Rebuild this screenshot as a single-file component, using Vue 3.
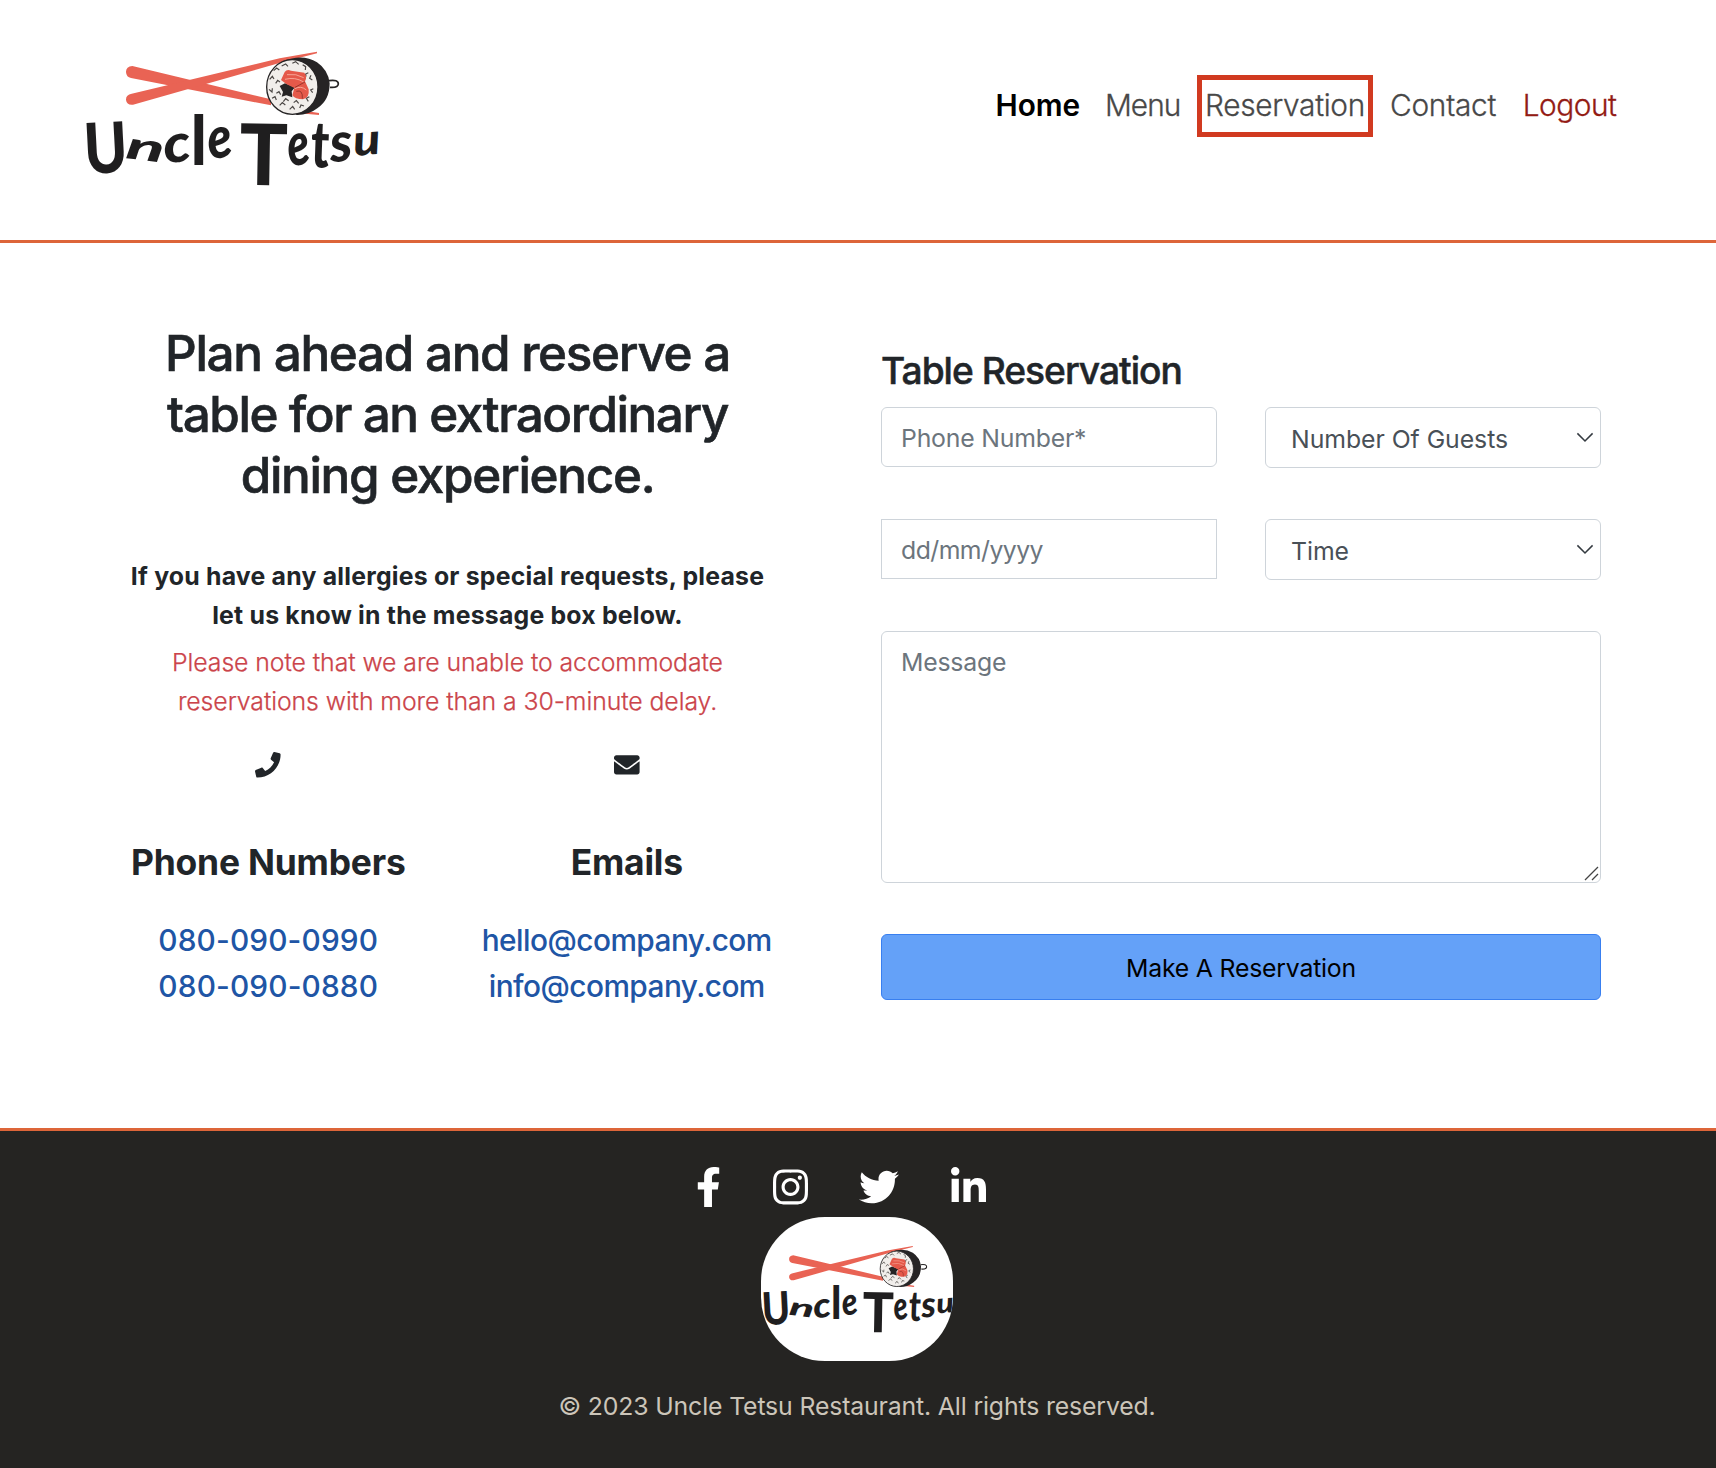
<script setup>
import { h } from 'vue'

// Brush-style wordmark: every letter has its own position, tilt and stretch.
const letters = [
  { c: 'U', x: 47, y: 432, r: -3, sx: 1.75, sy: 2.1, st: 'normal' },
  { c: 'n', x: 166, y: 384, r: 7, sx: 2.1, sy: 1.15, st: 'italic' },
  { c: 'c', x: 286, y: 400, r: -6, sx: 1.8, sy: 1.6, st: 'italic' },
  { c: 'l', x: 363, y: 404, r: 0, sx: 1.9, sy: 2.08, st: 'normal' },
  { c: 'e', x: 420, y: 388, r: -8, sx: 1.5, sy: 1.75, st: 'italic' },
  { c: 'T', x: 508, y: 464, r: 1, sx: 2.4, sy: 2.55, st: 'normal' },
  { c: 'e', x: 660, y: 409, r: -8, sx: 1.35, sy: 1.8, st: 'italic' },
  { c: 't', x: 722, y: 411, r: 2, sx: 1.45, sy: 1.95, st: 'normal' },
  { c: 's', x: 784, y: 396, r: -4, sx: 1.65, sy: 1.65, st: 'italic' },
  { c: 'u', x: 854, y: 378, r: -5, sx: 1.5, sy: 1.3, st: 'italic' },
]

const p = (d, a) => h('path', { d, ...a })
const dark = '#262425'
const Logo = () =>
  h('svg', { viewBox: '40 -69 887 667', role: 'img' }, [
    h('g', { fill: '#e96354' }, [
      p('M188 108 Q168 110 169 127 Q170 142 184 144 L604 226 L604 208 Z'),
      p('M690 240 L748 249 L748 255 L690 250 Z'),
      p('M186 191 Q168 194 169 210 Q171 226 190 224 L640 96 L742 70 L742 65 L630 85 Z'),
    ]),
    p('M640 93 Q700 70 742 97 Q776 120 780 160 Q780 210 744 234 Q716 256 680 255 Z', { fill: dark }),
    p('M778 152 Q806 148 806 162 Q805 174 781 172', { fill: 'none', stroke: dark, 'stroke-width': 5 }),
    h('ellipse', { cx: 668, cy: 171, rx: 77, ry: 82, fill: '#f1eeeb', stroke: dark, 'stroke-width': 4 }),
    p('M612 122l9-8 8 6M636 108l12-6 7 7M668 100l10-5 9 8M699 104l9 6-1 10M600 148l8-9 5 8M598 178l9 8 1-11M607 205l9-5 4 10M630 226l8-8 9 7M660 238l9-9 6 9M690 234l4-9 9 3M716 214l-6-9 9-5M729 188l-6-8 8-4M728 150l-8-5 4-9M641 215l7-9 9 6M672 218l8-6 7 8M620 190l8-5 5 9M618 160l6-9 7 5M716 128l-8 4 1 8', {
      fill: 'none', stroke: '#4a4644', 'stroke-width': 3.5,
    }),
    p('M630 168 L646 160 L676 172 L666 184 L668 202 L650 196 L636 200 L640 186 Z', { fill: dark }),
    p('M645 126 Q652 116 664 122 L704 128 Q714 142 706 154 L717 178 Q720 204 700 208 Q676 208 668 196 L674 174 L650 162 L634 150 Z', { fill: '#e5594a' }),
    p('M646 148 Q676 140 702 156M652 134 Q680 130 702 143M676 176 Q694 166 710 180', {
      fill: 'none', stroke: '#f6a596', 'stroke-width': 3,
    }),
    p('M676 172 L706 156M680 184 Q700 178 698 206', { fill: 'none', stroke: '#8c2f28', 'stroke-width': 2.5 }),
    h('g', letters.map((l) =>
      h('text', {
        fill: '#1f1e1f',
        'font-family': 'Lato, sans-serif',
        'font-weight': 900,
        'font-style': l.st,
        'font-size': 100,
        transform: `translate(${l.x} ${l.y}) rotate(${l.r}) scale(${l.sx} ${l.sy})`,
      }, l.c))),
  ])

const socials = [
  { name: 'Facebook', w: 320, d: 'M279.14 288l14.22-92.66h-88.91v-60.13c0-25.35 12.42-50.06 52.24-50.06h40.42V6.26S260.43 0 225.36 0c-73.22 0-121.08 44.38-121.08 124.72v70.62H22.89V288h81.39v224h100.17V288z' },
  { name: 'Instagram', w: 448, d: 'M224.1 141c-63.6 0-114.9 51.3-114.9 114.9s51.3 114.9 114.9 114.9S339 319.5 339 255.9 287.7 141 224.1 141zm0 189.6c-41.1 0-74.7-33.5-74.7-74.7s33.5-74.7 74.7-74.7 74.7 33.5 74.7 74.7-33.6 74.7-74.7 74.7zm146.4-194.3c0 14.9-12 26.8-26.8 26.8-14.9 0-26.8-12-26.8-26.8s12-26.8 26.8-26.8 26.8 12 26.8 26.8zm76.1 27.2c-1.7-35.9-9.9-67.7-36.2-93.9-26.2-26.2-58-34.4-93.9-36.2-37-2.1-147.9-2.1-184.9 0-35.8 1.7-67.6 9.9-93.9 36.1s-34.4 58-36.2 93.9c-2.1 37-2.1 147.9 0 184.9 1.7 35.9 9.9 67.7 36.2 93.9s58 34.4 93.9 36.2c37 2.1 147.9 2.1 184.9 0 35.9-1.7 67.7-9.9 93.9-36.2 26.2-26.2 34.4-58 36.2-93.9 2.1-37 2.1-147.8 0-184.8zM398.8 388c-7.8 19.6-22.9 34.7-42.6 42.6-29.5 11.7-99.5 9-132.1 9s-102.7 2.6-132.1-9c-19.6-7.8-34.7-22.9-42.6-42.6-11.7-29.5-9-99.5-9-132.1s-2.6-102.7 9-132.1c7.8-19.6 22.9-34.7 42.6-42.6 29.5-11.7 99.5-9 132.1-9s102.7-2.6 132.1 9c19.6 7.8 34.7 22.9 42.6 42.6 11.7 29.5 9 99.5 9 132.1s2.7 102.7-9 132.1z' },
  { name: 'Twitter', w: 512, d: 'M459.37 151.716c.325 4.548.325 9.097.325 13.645 0 138.72-105.583 298.558-298.558 298.558-59.452 0-114.68-17.219-161.137-47.106 8.447.974 16.568 1.299 25.34 1.299 49.055 0 94.213-16.568 130.274-44.832-46.132-.975-84.792-31.188-98.112-72.772 6.498.974 12.995 1.624 19.818 1.624 9.421 0 18.843-1.3 27.614-3.573-48.081-9.747-84.143-51.98-84.143-102.985v-1.299c13.969 7.797 30.214 12.67 47.431 13.319-28.264-18.843-46.781-51.005-46.781-87.391 0-19.492 5.197-37.36 14.294-52.954 51.655 63.675 129.3 105.258 216.365 109.807-1.624-7.797-2.599-15.918-2.599-24.04 0-57.828 46.782-104.934 104.934-104.934 30.213 0 57.502 12.67 76.67 33.137 23.715-4.548 46.456-13.32 66.599-25.34-7.798 24.366-24.366 44.833-46.132 57.827 21.117-2.273 41.584-8.122 60.426-16.243-14.292 20.791-32.161 39.308-52.628 54.253z' },
  { name: 'LinkedIn', w: 448, d: 'M100.28 448H7.4V148.9h92.88zM53.79 108.1C24.09 108.1 0 83.5 0 53.8a53.79 53.79 0 0 1 107.58 0c0 29.7-24.1 54.3-53.79 54.3zM447.9 448h-92.68V302.4c0-34.7-.7-79.2-48.29-79.2-48.29 0-55.69 37.7-55.69 76.7V448h-92.78V148.9h89.08v40.8h1.3c12.4-23.5 42.69-48.3 87.88-48.3 94 0 111.28 61.9 111.28 142.3V448z' },
]
</script>

<template>
  <div class="page">
    <header class="header">
      <Logo class="logo" />
      <nav class="nav">
        <a class="home">Home</a>
        <a class="menu">Menu</a>
        <a class="current">Reservation</a>
        <a class="contact">Contact</a>
        <a class="logout">Logout</a>
      </nav>
    </header>

    <main class="main">
      <section class="info">
        <h1>
          <span class="h-a">Plan ahead and reserve a</span>
          <span class="h-b">table for an extraordinary</span>
          <span class="h-c">dining experience.</span>
        </h1>
        <p class="lead">If you have any allergies or special requests, please<br />let us know in the message box below.</p>
        <p class="note">Please note that we are unable to accommodate<br />reservations with more than a 30-minute delay.</p>
        <div class="contacts">
          <div class="channel">
            <svg class="glyph" viewBox="0 0 512 512"><path d="M493.4 24.6l-104-24c-11.3-2.6-22.9 3.3-27.5 13.9l-48 112c-4.2 9.8-1.4 21.3 6.9 28l60.6 49.6c-36 76.7-98.9 140.5-177.2 177.2l-49.6-60.6c-6.8-8.3-18.2-11.1-28-6.9l-112 48C3.9 366.5-2 378.1.6 389.4l24 104C27.1 504.2 36.7 512 48 512c256.1 0 464-207.5 464-464 0-11.2-7.7-20.9-18.6-23.4z" /></svg>
            <h2>Phone Numbers</h2>
            <a class="tel">080-090-0990</a>
            <a class="tel">080-090-0880</a>
          </div>
          <div class="channel">
            <svg class="glyph" viewBox="0 0 512 512"><path d="M502.3 190.8c3.9-3.1 9.7-.2 9.7 4.7V400c0 26.5-21.5 48-48 48H48c-26.5 0-48-21.5-48-48V195.6c0-5 5.7-7.8 9.7-4.7 22.4 17.4 52.1 39.5 154.1 113.6 21.1 15.4 56.7 47.8 92.2 47.6 35.7.3 72-32.8 92.3-47.6 102-74.1 131.6-96.3 154-113.7zM256 320c23.2.4 56.6-29.2 73.4-41.4 132.7-96.3 142.8-104.7 173.4-128.7 5.8-4.5 9.2-11.5 9.2-18.9v-19c0-26.5-21.5-48-48-48H48c-26.5 0-48 21.5-48 48v19c0 7.4 3.4 14.3 9.2 18.9 30.6 23.9 40.7 32.4 173.4 128.7 16.8 12.2 50.2 41.8 73.4 41.4z" /></svg>
            <h2>Emails</h2>
            <a class="mail">hello@company.com</a>
            <a class="mail">info@company.com</a>
          </div>
        </div>
      </section>

      <form class="form" @submit.prevent>
        <h2 class="form-title">Table Reservation</h2>
        <div class="fields">
          <input class="field phone" placeholder="Phone Number*" />
          <div class="select">
            <span>Number Of Guests</span>
            <svg class="chevron" viewBox="0 0 18 11"><path d="M1.4 1.4 9 9l7.600-7.600" /></svg>
          </div>
          <input class="field date" placeholder="dd/mm/yyyy" />
          <div class="select">
            <span>Time</span>
            <svg class="chevron" viewBox="0 0 18 11"><path d="M1.4 1.4 9 9l7.600-7.600" /></svg>
          </div>
        </div>
        <div class="message">
          <textarea placeholder="Message"></textarea>
          <svg class="grip" viewBox="0 0 15 15"><path d="M1 14 14 1M8 14l6-6" /></svg>
        </div>
        <button type="submit" class="submit">Make A Reservation</button>
      </form>
    </main>

    <footer class="footer">
      <div class="socials">
        <svg v-for="s in socials" :key="s.name" height="40" :width="s.w * 40 / 512" :viewBox="`0 0 ${s.w} 512`" :aria-label="s.name"><path :d="s.d" /></svg>
      </div>
      <Logo class="footer-logo" />
      <p class="copyright">© 2023 Uncle Tetsu Restaurant. All rights reserved.</p>
    </footer>
  </div>
</template>

<style>
body { margin: 0; background: #fff; }
</style>

<style scoped>
.page, .page * { box-sizing: border-box; }
.page {
  width: 1716px;
  height: 1468px;
  display: flex;
  flex-direction: column;
  overflow: hidden;
  font-family: Inter, "Noto Sans", sans-serif;
  font-size: 24.8px;
  color: #212529;
}
h1, h2, p { margin: 0; }

.header {
  height: 243px;
  flex: none;
  border-bottom: 3px solid #dd6539;
  display: flex;
  justify-content: space-between;
  align-items: flex-start;
  padding: 7px 99.500px 0 83.3px;
}
.logo { width: 295.7px; height: 222.3px; }
.nav {
  display: flex;
  align-items: flex-start;
  margin-top: 68px;
  height: 62px;
  line-height: 60px;
  font-size: 29.8px;
  font-weight: 300;
  color: #484848;
  -webkit-text-stroke: 0.3px currentColor;
}
.home { font-weight: 600; color: #000; margin-right: 25px; -webkit-text-stroke: 0; letter-spacing: -0.1px; }
.menu { letter-spacing: -0.9px; margin-right: 16.500px; }
.current {
  width: 176px;
  height: 62px;
  line-height: 50px;
  text-align: center;
  border: 5px solid #d13a20;
  letter-spacing: -0.32px;
}
.contact { letter-spacing: -0.25px; margin: 0 26.500px 0 17px; }
.logout { letter-spacing: -0.45px; color: #931b14; }

.main { height: 885px; flex: none; display: flex; padding-left: 89px; }
.info { width: 717px; text-align: center; padding-top: 79.600px; }
h1 { font-size: 49.4px; font-weight: 500; line-height: 61.4px; -webkit-text-stroke: 0.6px currentColor; }
h1 span { display: block; }
.h-a { letter-spacing: -1.29px; }
.h-b { letter-spacing: -1.42px; }
.h-c { letter-spacing: -1.3px; }
.lead { margin-top: 50.500px; line-height: 38.4px; font-weight: 700; letter-spacing: 0.22px; }
.note { margin-top: 9px; line-height: 38.800px; font-weight: 300; letter-spacing: -0.07px; color: #cb444a; -webkit-text-stroke: 0.25px currentColor; }
.contacts { display: flex; margin-top: 31.500px; }
.channel { flex: 1; display: flex; flex-direction: column; align-items: center; }
.glyph { width: 25.6px; height: 25.6px; fill: #212529; }
.channel h2 { margin: 63.500px 0 31.500px; font-size: 35.4px; line-height: 44px; font-weight: 700; letter-spacing: -0.19px; }
.channel a { font-size: 29.8px; line-height: 46px; font-weight: 500; color: #2055a5; }
.tel { letter-spacing: 0.15px; }
.mail { letter-spacing: -0.53px; }

.form { width: 720px; margin-left: 75px; padding-top: 104.500px; }
.form-title { font-size: 37.2px; line-height: 46px; font-weight: 500; letter-spacing: -1.02px; margin-bottom: 13.500px; -webkit-text-stroke: 0.5px currentColor; }
.fields { display: grid; grid-template-columns: 336px 336px; gap: 51px 48px; align-items: start; grid-auto-rows: 61px; }
.field, .select, textarea, .submit {
  border: 1px solid #ced4da;
  border-radius: 6px;
  background: #fff;
  font: inherit;
  color: #212529;
  outline: none;
}
.field { width: 336px; height: 60px; padding: 1px 19px 0; }
.field::placeholder, textarea::placeholder { color: #6c757d; opacity: 1; }
.phone { letter-spacing: -0.2px; }
.date { letter-spacing: -0.55px; border-radius: 0; }
.select { height: 61px; display: flex; align-items: center; justify-content: space-between; padding: 2px 6px 0 25px; color: #495057; letter-spacing: -0.05px; }
.chevron { width: 18px; height: 11px; margin-top: -3px; fill: none; stroke: #343a40; stroke-width: 1.5; }
.message { position: relative; margin-top: 51px; height: 252px; }
textarea { display: block; width: 720px; height: 252px; resize: none; padding: 11px 19px; line-height: 38.4px; letter-spacing: -0.2px; }
.grip { position: absolute; right: 2px; bottom: 2px; width: 15px; height: 15px; fill: none; stroke: #444; stroke-width: 1.3; }
.submit { display: block; width: 720px; height: 66px; margin-top: 51px; padding: 1px 0 0; background: #64a1f8; border-color: #387ff0; color: #000; letter-spacing: -0.2px; }

.footer { flex: 1; background: #252422; border-top: 3px solid #dd6539; display: flex; flex-direction: column; align-items: center; padding: 36px 2px 0 0; }
.socials { display: flex; gap: 51.600px; padding-right: 32px; fill: #fff; }
.socials svg { display: block; }
.footer-logo { width: 192px; height: 144px; margin-top: 10px; background: #fff; border-radius: 64px; overflow: hidden; }
.copyright { margin-top: 25.500px; line-height: 38.4px; color: #ccc5b9; letter-spacing: -0.14px; }
</style>
